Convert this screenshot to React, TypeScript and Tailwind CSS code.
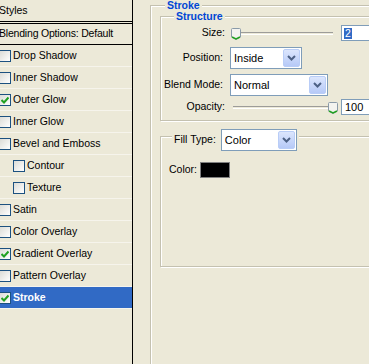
import React from 'react';

const styleRows = [
  { label: 'Drop Shadow', checked: false },
  { label: 'Inner Shadow', checked: false },
  { label: 'Outer Glow', checked: true },
  { label: 'Inner Glow', checked: false },
  { label: 'Bevel and Emboss', checked: false },
  { label: 'Contour', checked: false, indent: true },
  { label: 'Texture', checked: false, indent: true },
  { label: 'Satin', checked: false },
  { label: 'Color Overlay', checked: false },
  { label: 'Gradient Overlay', checked: true },
  { label: 'Pattern Overlay', checked: false },
  { label: 'Stroke', checked: true, selected: true },
];

function CheckBox({ checked }: { checked: boolean }) {
  return (
    <span className="flex h-[12px] w-[12px] shrink-0 items-center justify-center border border-[#1c5180] bg-gradient-to-br from-[#dcdcd7] to-white">
      {checked && (
        <svg width="8" height="8" viewBox="0 0 8 8">
          <path d="M0.5 4 L3 6.5 L7.5 1.5" fill="none" stroke="#21a121" strokeWidth="2" />
        </svg>
      )}
    </span>
  );
}

function Chevron() {
  return (
    <svg width="9" height="6" viewBox="0 0 9 6">
      <path d="M1 1 L4.5 4.5 L8 1" fill="none" stroke="#4d6185" strokeWidth="2" />
    </svg>
  );
}

function Select({ value, width }: { value: string; width: string }) {
  return (
    <div className={`flex h-[22px] ${width} shrink-0 items-center border border-[#7f9db9] bg-white p-px`}>
      <span className="flex-1 pl-[2px] text-[11px] text-black">{value}</span>
      <span className="flex h-full w-[17px] items-center justify-center rounded-[2px] border border-[#b9cdf7] bg-gradient-to-b from-[#dce6fd] to-[#b6c9f7]">
        <Chevron />
      </span>
    </div>
  );
}

function Thumb() {
  return (
    <svg width="10" height="12" viewBox="0 0 10 12">
      <path d="M1.5 0.5 H8.5 Q9.5 0.5 9.5 1.5 V9 L5 11.5 L0.5 9 V1.5 Q0.5 0.5 1.5 0.5 Z" fill="#f3f3ef" stroke="#8a9aa8" />
      <path d="M1 9 L5 11 L9 9" fill="none" stroke="#21a121" strokeWidth="1.5" />
    </svg>
  );
}

function Slider({ value }: { value: number }) {
  return (
    <div className="relative h-full w-[107px] shrink-0">
      <div className="absolute left-[3px] right-[4px] top-[7px] h-[3px] border-t border-[#9d9c99] border-b border-b-white" />
      <div className="absolute top-[3px]" style={{ left: `${(value / 100) * 98}px` }}>
        <Thumb />
      </div>
    </div>
  );
}

export default function App() {
  return (
    <div className="flex h-[364px] w-[369px] overflow-hidden bg-[#ece9d8] font-['Liberation_Sans',Arial,sans-serif] text-[10.5px] text-black">
      {/* styles list */}
      <div className="flex w-[133px] shrink-0 flex-col border-r border-black">
        <div className="flex h-[21px] items-center -ml-px">Styles</div>
        <div className="h-[3px] border-y border-black" />
        <div className="flex h-[21px] items-center border-b border-black -ml-px tracking-[-0.2px]">Blending Options: Default</div>
        {styleRows.map((row) => (
          <div
            key={row.label}
            className={`flex h-[22px] items-center gap-[2px] border-b ${
              row.selected ? 'border-[#f6f4ec] bg-[#316ac5] font-bold text-white' : 'border-[#f6f4ec]'
            } ${row.indent ? 'pl-[13px]' : '-ml-px'}`}
          >
            <CheckBox checked={row.checked} />
            <span>{row.label}</span>
          </div>
        ))}
      </div>

      {/* stroke settings */}
      <div className="flex-1 overflow-hidden">
        <div className="ml-[17px] mt-[5px] h-[400px] w-[260px] border-l border-t border-[#c4c1b0] shadow-[inset_1px_1px_0_#fff]">
          <div className="-mt-[7px] ml-[14px] h-[12px] w-fit bg-[#ece9d8] px-[2px] text-[10.5px] font-bold leading-[12px] text-[#0046d5]">
            Stroke
          </div>

          <div className="ml-[9px] mt-[5px] w-[240px] border border-[#c4c1b0] pb-[5px] shadow-[inset_1px_1px_0_#fff,1px_1px_0_#fff]">
            <div className="-mt-[7px] ml-[13px] h-[13px] w-fit bg-[#ece9d8] px-[2px] text-[10.5px] font-bold leading-[13px] text-[#0046d5]">
              Structure
            </div>

            <div className="mt-[2px] flex h-[16px] items-center">
              <span className="w-[64px] text-right">Size:</span>
              <span className="ml-[5px] flex h-full">
                <Slider value={1} />
              </span>
              <div className="ml-[4px] flex h-[16px] w-[40px] items-center border border-[#7f9db9] bg-white pl-[2px]">
                <span className="bg-[#316ac5] px-[1px] leading-[11px] text-white">2</span>
              </div>
            </div>

            <div className="mt-[6px] flex h-[22px] items-center">
              <span className="w-[62px] text-right">Position:</span>
              <span className="ml-[7px]">
                <Select value="Inside" width="w-[72px]" />
              </span>
            </div>

            <div className="mt-[5px] flex h-[22px] items-center">
              <span className="w-[62px] text-right">Blend Mode:</span>
              <span className="ml-[7px]">
                <Select value="Normal" width="w-[98px]" />
              </span>
            </div>

            <div className="mt-[3px] flex h-[16px] items-center">
              <span className="w-[64px] text-right">Opacity:</span>
              <span className="ml-[5px] flex h-full">
                <Slider value={100} />
              </span>
              <div className="ml-[4px] flex h-[16px] w-[40px] items-center border border-[#7f9db9] bg-white pl-[3px] text-[11px]">
                100
              </div>
            </div>
          </div>

          <div className="ml-[9px] mt-[15px] h-[131px] w-[240px] border border-[#c4c1b0] shadow-[inset_1px_1px_0_#fff,1px_1px_0_#fff]">
            <div className="-mt-[8px] ml-[11px] flex h-[22px] w-fit items-center gap-[5px] bg-[#ece9d8] px-[2px]">
              <span>Fill Type:</span>
              <Select value="Color" width="w-[76px]" />
            </div>
            <div className="ml-[8px] mt-[11px] flex h-[16px] items-center gap-[3px]">
              <span>Color:</span>
              <span className="h-[16px] w-[30px] border border-[#808080] bg-black" />
            </div>
          </div>
        </div>
      </div>
    </div>
  );
}
